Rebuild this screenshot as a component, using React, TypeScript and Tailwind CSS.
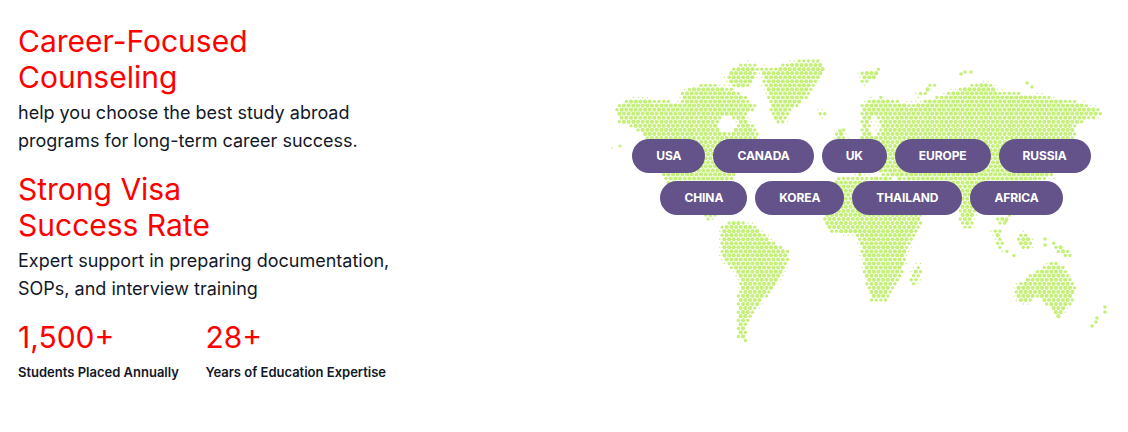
type Pt = [number, number];

const land: Pt[][] = [
  // north america
  [[615,110],[620,104],[633,98],[650,99],[680,103],[681,92],[703,83],[717,85],[737,91],[745,97],[757,107],[750,113],[743,115],[752,124],[757,132],[758,145],[745,150],[738,172],[733,178],[722,186],[716,200],[716,218],[708,220],[700,205],[680,195],[664,178],[655,160],[648,140],[640,132],[628,126],[620,124]],
  // greenland and arctic islands
  [[727,72],[743,63],[760,66],[764,84],[768,95],[773,121],[784,125],[788,112],[804,101],[815,84],[827,70],[822,61],[800,60],[773,68],[760,66],[752,86],[738,90],[727,84]],
  // south america
  [[722,226],[733,219],[753,225],[767,237],[788,250],[790,258],[780,280],[770,293],[755,310],[748,323],[746,334],[748,343],[738,337],[736,317],[740,282],[733,270],[722,258],[721,242]],
  // europe, asia
  [[862,103],[880,97],[896,101],[913,104],[937,97],[960,88],[980,82],[990,83],[1000,92],[1027,94],[1057,98],[1077,101],[1097,108],[1102,113],[1093,118],[1077,125],[1074,137],[1066,150],[1054,176],[1035,182],[1018,195],[1010,218],[1000,208],[985,198],[978,198],[972,229],[962,229],[958,208],[935,195],[918,183],[885,176],[862,165],[860,140]],
  // africa
  [[823,190],[840,177],[880,176],[920,185],[940,200],[922,215],[920,228],[907,250],[903,270],[887,300],[872,303],[863,275],[863,260],[857,234],[840,235],[825,228]],
  // western europe
  [[829,160],[846,148],[862,135],[862,175],[832,172]],
  // uk
  [[835,132],[843,128],[847,142],[838,145]],
  // madagascar
  [[918,262],[921,272],[915,287],[911,282],[912,271]],
  // australia
  [[1015,287],[1033,272],[1050,262],[1063,265],[1076,288],[1073,300],[1064,313],[1059,320],[1053,315],[1050,307],[1037,298],[1022,304],[1015,297]],
  // new guinea
  [[1053,243],[1062,245],[1074,256],[1068,258],[1056,250]],
  // borneo, sulawesi
  [[1016,242],[1024,231],[1031,240],[1030,248],[1022,249]],
  // sumatra, java
  [[993,229],[1000,231],[1004,248],[1016,256],[1012,257],[997,246]],
  // philippines etc
  [[994,215],[1008,216],[1007,224],[1000,224]],
  // iceland
  [[815,110],[828,111],[824,116],[818,115]],
  // svalbard
  [[860,72],[882,68],[875,80],[862,84]],
  // novaya zemlya
  [[918,94],[933,82],[935,85],[921,98]],
];

const strays: Pt[] = [
  [1045,239],[1045,245],[1105,307],[1105,312],[1097,318],[1092,326],[1096,322],[965,72],[961,74],[971,72],[1027,83],[1032,87],[840,131],[1006,221],
];

function inPoly(x: number, y: number, poly: Pt[]) {
  let inside = false;
  for (let i = 0, j = poly.length - 1; i < poly.length; j = i++) {
    const [xi, yi] = poly[i];
    const [xj, yj] = poly[j];
    if (yi > y !== yj > y && x < ((xj - xi) * (y - yi)) / (yj - yi) + xi) inside = !inside;
  }
  return inside;
}

function inLand(x: number, y: number) {
  // hudson bay, baltic sea
  if ((x - 727) ** 2 / 90 + (y - 124) ** 2 / 60 < 1) return false;
  if ((x - 875) ** 2 / 16 + (y - 126) ** 2 / 80 < 1) return false;
  return land.some((p) => inPoly(x, y, p));
}

const dots: { x: number; y: number; r: number }[] = [];
for (let row = 0; row < 75; row++) {
  const y = 57 + row * 4.05;
  for (let col = 0; col < 108; col++) {
    const x = 610 + col * 4.67 + (row % 2 ? 2.33 : 0);
    if (inLand(x, y)) {
      const edge = [[2.4,0],[-2.4,0],[0,2.4],[0,-2.4]].some(([a, b]) => !inLand(x + a, y + b));
      dots.push({ x, y, r: edge ? 1.7 : 2.1 });
    } else if ((x * 7 + y * 13) % 3 < 1.2 && [[3,0],[-3,0],[0,3],[0,-3]].some(([a, b]) => inLand(x + a, y + b))) {
      dots.push({ x, y, r: 0.7 });
    }
  }
}

function WorldMap() {
  return (
    <svg className="absolute inset-0" width="533" height="432" viewBox="595 0 533 432" fill="#c5f07a">
      {dots.map((d, i) => (
        <circle key={i} cx={d.x} cy={d.y} r={d.r} />
      ))}
      {strays.map(([x, y], i) => (
        <circle key={i} cx={x} cy={y} r={1.8} />
      ))}
      <circle cx={620} cy={146} r={1.5} />
      <circle cx={612} cy={148} r={0.7} />
    </svg>
  );
}

function Pill({ label }: { label: string }) {
  return (
    <span className="flex h-[34px] items-center rounded-[17px] bg-[#63538a] px-6 text-xs font-bold tracking-[-0.1px] text-white">
      {label}
    </span>
  );
}

function Stat({ value, label }: { value: string; label: string }) {
  return (
    <div>
      <div className="text-3xl leading-9 text-[#ff0000]">{value}</div>
      <div className="mt-[7px] text-[13px] leading-5 font-semibold text-[#111827]">{label}</div>
    </div>
  );
}

export default function App() {
  return (
    <div className="flex h-[432px] bg-white font-['Inter',sans-serif]">
      <div className="w-[595px] pt-[23px] pl-[18px]">
        <h2 className="w-[300px] text-3xl leading-9 text-[#ff0000]">Career-Focused Counseling</h2>
        <p className="mt-1 w-[400px] text-lg leading-7 text-[#111827]">
          help you choose the best study abroad
          <br />
          programs for long-term career success.
        </p>
        <h2 className="mt-4 w-[300px] text-3xl leading-9 text-[#ff0000]">
          Strong Visa
          <br />
          Success Rate
        </h2>
        <p className="mt-1 w-[400px] text-lg leading-7 text-[#111827]">
          Expert support in preparing documentation,
          <br />
          SOPs, and interview training
        </p>
        <div className="mt-4 flex gap-[26.5px]">
          <Stat value="1,500+" label="Students Placed Annually" />
          <Stat value="28+" label="Years of Education Expertise" />
        </div>
      </div>
      <div className="relative flex w-[533px] flex-col items-center gap-2 pt-[139px]">
        <WorldMap />
        <div className="relative flex gap-2">
          {["USA", "CANADA", "UK", "EUROPE", "RUSSIA"].map((c) => (
            <Pill key={c} label={c} />
          ))}
        </div>
        <div className="relative flex gap-2">
          {["CHINA", "KOREA", "THAILAND", "AFRICA"].map((c) => (
            <Pill key={c} label={c} />
          ))}
        </div>
      </div>
    </div>
  );
}
